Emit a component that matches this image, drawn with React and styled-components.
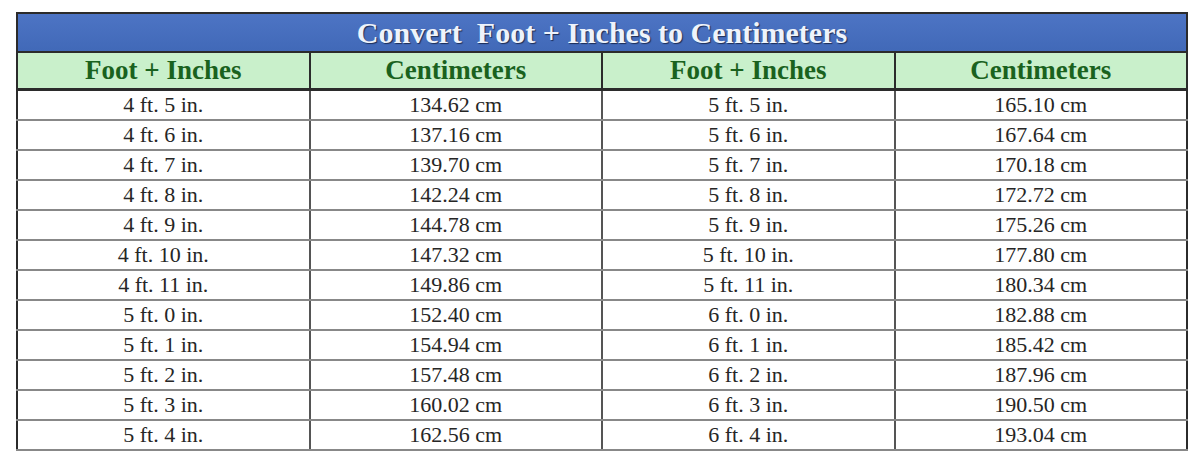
import React from 'react';
import styled, {createGlobalStyle} from 'styled-components';

const GlobalStyle = createGlobalStyle`
  html, body {
    margin: 0;
    padding: 0;
    background: #fff;
  }
  body {
    font-family: "Liberation Serif", "Times New Roman", serif;
  }
`;

const Page = styled.div`
  padding: 12px 12px 0 16px;
  width: 1200px;
  box-sizing: border-box;
`;

const Table = styled.table`
  width: 1172px;
  border-collapse: collapse;
  table-layout: fixed;
  border: 2px solid #2b2b2b;
`;

const TitleCell = styled.th`
  height: 37px;
  padding: 0;
  background: linear-gradient(#4d74c4, #4169b8);
  color: #eef3fb;
  font-size: 30px;
  line-height: 1;
  font-weight: bold;
  text-align: center;
  text-shadow: 1px 1px 1px #1c2c55;
  border-bottom: 2px solid #2b2b2b;
  white-space: pre;
`;

const HeadCell = styled.th`
  height: 35px;
  padding: 0;
  background: #c9f0cb;
  color: #1a621e;
  font-size: 27px;
  line-height: 1;
  font-weight: bold;
  text-align: center;
  border-left: 2px solid #2b2b2b;
  border-bottom: 3px solid #2b2b2b;
  &:first-child {
    border-left: none;
  }
`;

const Cell = styled.td`
  height: 28px;
  padding: 0;
  color: #262626;
  font-size: 22px;
  line-height: 1;
  text-align: center;
  border-left: 2px solid #555;
  border-bottom: 2px solid #888;
  &:first-child {
    border-left: none;
  }
`;

const rows = [
  ['4 ft. 5 in.', '134.62 cm', '5 ft. 5 in.', '165.10 cm'],
  ['4 ft. 6 in.', '137.16 cm', '5 ft. 6 in.', '167.64 cm'],
  ['4 ft. 7 in.', '139.70 cm', '5 ft. 7 in.', '170.18 cm'],
  ['4 ft. 8 in.', '142.24 cm', '5 ft. 8 in.', '172.72 cm'],
  ['4 ft. 9 in.', '144.78 cm', '5 ft. 9 in.', '175.26 cm'],
  ['4 ft. 10 in.', '147.32 cm', '5 ft. 10 in.', '177.80 cm'],
  ['4 ft. 11 in.', '149.86 cm', '5 ft. 11 in.', '180.34 cm'],
  ['5 ft. 0 in.', '152.40 cm', '6 ft. 0 in.', '182.88 cm'],
  ['5 ft. 1 in.', '154.94 cm', '6 ft. 1 in.', '185.42 cm'],
  ['5 ft. 2 in.', '157.48 cm', '6 ft. 2 in.', '187.96 cm'],
  ['5 ft. 3 in.', '160.02 cm', '6 ft. 3 in.', '190.50 cm'],
  ['5 ft. 4 in.', '162.56 cm', '6 ft. 4 in.', '193.04 cm'],
];

const App = () => {
  return (
    <Page>
      <GlobalStyle />
      <Table>
        <thead>
          <tr>
            <TitleCell colSpan={4}>Convert  Foot + Inches to Centimeters</TitleCell>
          </tr>
          <tr>
            <HeadCell>Foot + Inches</HeadCell>
            <HeadCell>Centimeters</HeadCell>
            <HeadCell>Foot + Inches</HeadCell>
            <HeadCell>Centimeters</HeadCell>
          </tr>
        </thead>
        <tbody>
          {rows.map((row, i) => (
            <tr key={i}>
              {row.map((val, j) => (
                <Cell key={j}>{val}</Cell>
              ))}
            </tr>
          ))}
        </tbody>
      </Table>
    </Page>
  );
};

export default App;
